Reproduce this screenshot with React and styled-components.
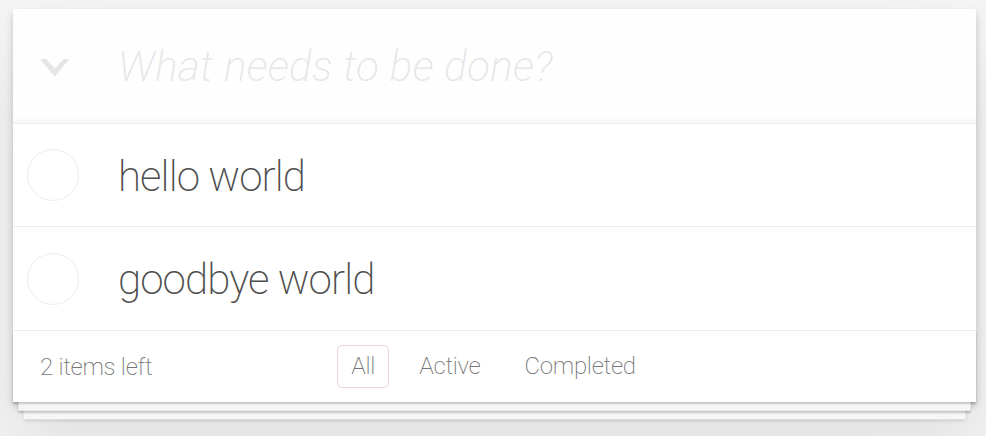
import React, { useState } from 'react'
import styled, { createGlobalStyle } from 'styled-components'

const GlobalStyle = createGlobalStyle`
  html, body {
    margin: 0;
    padding: 0;
    background: #f5f5f5;
  }
  body {
    font-family: "Helvetica Neue", Roboto, "Liberation Sans", Arial, sans-serif;
    font-weight: 200;
    color: #4d4d4d;
    -webkit-font-smoothing: antialiased;
  }
`

const Page = styled.div`
  padding: 9px 10px 40px 13px;
`

const Card = styled.section`
  background: #fff;
  box-shadow: 0 3.5px 7px rgba(0, 0, 0, 0.2), 0 44px 88px rgba(0, 0, 0, 0.1);
`

const Header = styled.header`
  display: flex;
  align-items: center;
  height: 114px;
  background: rgba(0, 0, 0, 0.003);
  box-shadow: inset 0 -3.5px 1.75px rgba(0, 0, 0, 0.03);
  border-bottom: 1px solid #ededed;
`

const ToggleAll = styled.div`
  width: 105px;
  box-sizing: border-box;
  display: flex;
  align-items: center;
  padding: 3px 0 0 27px;
`

const NewTodo = styled.input`
  flex: 1;
  border: 0;
  outline: none;
  background: transparent;
  padding: 0;
  font-family: inherit;
  font-weight: 200;
  font-size: 42px;
  color: #4d4d4d;

  &::placeholder {
    font-style: italic;
    font-weight: 200;
    letter-spacing: 0.45px;
    color: #e6e6e6;
  }
`

const List = styled.ul`
  margin: 0;
  padding: 0;
  list-style: none;
`

const Item = styled.li`
  display: flex;
  align-items: center;
  border-bottom: 1px solid #ededed;
`

const Check = styled.span`
  width: 105px;
  box-sizing: border-box;
  display: flex;
  align-items: center;
  align-self: stretch;
  padding-left: 14px;
`

const Circle = styled.span`
  box-sizing: border-box;
  width: 52px;
  height: 52px;
  border-radius: 50%;
  border: 1.5px solid ${(p) => (p.done ? '#bddad5' : '#ededed')};
`

const Label = styled.label`
  flex: 1;
  padding: 28px 26px 24px 0;
  font-size: 42px;
  line-height: 1.2;
  letter-spacing: -0.9px;
  color: ${(p) => (p.done ? '#d9d9d9' : '#4d4d4d')};
  text-decoration: ${(p) => (p.done ? 'line-through' : 'none')};
`

const Footer = styled.footer`
  display: grid;
  grid-template-columns: 1fr auto 1fr;
  align-items: center;
  height: 71px;
  padding: 0 27px;
  color: #777;
  font-size: 24px;
  font-weight: 200;
  box-shadow: 0 1.75px 1.75px rgba(0, 0, 0, 0.2),
    0 14px 0 -5.25px #f6f6f6,
    0 15.75px 1.75px -5.25px rgba(0, 0, 0, 0.2),
    0 28px 0 -10.5px #f6f6f6,
    0 29.75px 3.5px -10.5px rgba(0, 0, 0, 0.2);
`

const Count = styled.span`
  padding-top: 1px;
  letter-spacing: -0.3px;
`

const Filters = styled.ul`
  display: flex;
  gap: 16px;
  margin: 0 0 0 -2px;
  padding: 0;
  list-style: none;
`

const FilterLink = styled.a`
  display: block;
  padding: 5px 13px;
  line-height: 31px;
  letter-spacing: -0.3px;
  border: 1px solid ${(p) => (p.selected ? 'rgba(175, 47, 47, 0.2)' : 'transparent')};
  border-radius: 5px;
  color: inherit;
  text-decoration: none;
  cursor: pointer;
`

const Chevron = () => (
  <svg width="30" height="18" viewBox="0 0 30 18">
    <polygon points="0,0 6,0 14.75,9.5 23.5,0 29.5,0 14.75,17.5" fill="#e6e6e6" />
  </svg>
)

const filters = ['All', 'Active', 'Completed']

const App = () => {
  const [todos] = useState([
    { id: 1, title: 'hello world', done: false },
    { id: 2, title: 'goodbye world', done: false },
  ])
  const [filter, setFilter] = useState('All')
  const left = todos.filter((t) => !t.done).length

  return (
    <Page>
      <GlobalStyle />
      <Card>
        <Header>
          <ToggleAll><Chevron /></ToggleAll>
          <NewTodo placeholder="What needs to be done?" />
        </Header>
        <List>
          {todos.map((todo) => (
            <Item key={todo.id}>
              <Check><Circle done={todo.done} /></Check>
              <Label done={todo.done}>{todo.title}</Label>
            </Item>
          ))}
        </List>
        <Footer>
          <Count>{left} items left</Count>
          <Filters>
            {filters.map((name) => (
              <li key={name}>
                <FilterLink selected={filter === name} onClick={() => setFilter(name)}>{name}</FilterLink>
              </li>
            ))}
          </Filters>
          <span />
        </Footer>
      </Card>
    </Page>
  )
}

export default App
